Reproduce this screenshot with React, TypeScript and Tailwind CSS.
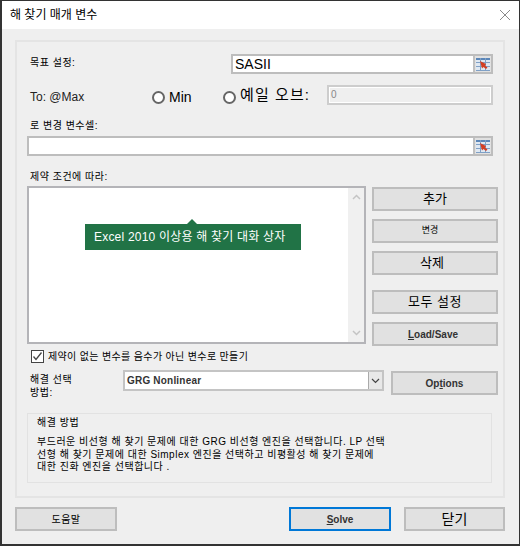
const font = { fontFamily: '"Liberation Sans","Noto Sans CJK KR",sans-serif' };

function RefIcon() {
  return (
    <div className="w-[18px] h-full shrink-0 bg-[#e1e1e1] border-l-2 border-[#c0c0c0] flex items-center justify-center">
      <svg width="14" height="13" viewBox="0 0 14 13">
        <rect x="0" y="0" width="14" height="13" fill="#dfe8f2" />
        <rect x="0" y="0" width="14" height="2" fill="#5b86b8" />
        <path d="M0 4.500H14M0 8.500H14M0 12.500H14M4.500 0V13M9.500 0V13" stroke="#7fa0c6" strokeWidth="1" fill="none" />
        <path d="M4 3L10 6L9 7.500L11.500 9.500L10 11L7.500 9L6 10.500Z" fill="#d43f24" />
      </svg>
    </div>
  );
}

function Btn({ children, className = "" }: { children: React.ReactNode; className?: string }) {
  return (
    <div className={`flex items-center justify-center bg-[#e1e1e1] border-2 border-[#bdbdbd] text-black ${className}`}>
      {children}
    </div>
  );
}

function Radio() {
  return <div className="w-[13px] h-[13px] mt-[4px] rounded-full bg-white border-2 border-[#666] shrink-0" />;
}

export default function App() {
  return (
    <div style={font} className="w-[520px] h-[546px] bg-[#efefef] border-[#333] border-l-2 border-t border-r border-b-2 flex flex-col overflow-hidden text-black">
      <div className="h-[28px] shrink-0 bg-white flex items-center justify-between pl-[8px] pr-[7px]">
        <span className="text-[12px]">해 찾기 매개 변수</span>
        <svg width="12" height="12" viewBox="0 0 12 12" className="mr-[1px]">
          <path d="M1 1L11 11M11 1L1 11" stroke="#8a8a8a" strokeWidth="1" fill="none" />
        </svg>
      </div>

      <div className="ml-[13px] mr-[14px] mt-[11px] h-[458px] border-2 border-[#e4e4e4] pl-[10px] pr-[4px] flex flex-col shrink-0">
        <div className="mt-[12px] h-[20px] flex items-center pr-[6px]">
          <span className="pl-[3px] text-[10px] tracking-[0.5px] -mt-[4px]">목표 설정:</span>
          <div className="ml-auto w-[262px] h-[20px] bg-white border-2 border-[#bdbdbd] flex items-center justify-between">
            <span className="pl-[2px] text-[14px]">SASII</span>
            <RefIcon />
          </div>
        </div>

        <div className="mt-[11px] h-[20px] flex items-center pr-[6px]" >
          <span className="pl-[3px] text-[12px] w-[125px] text-[#222] mt-[4px]">To: @Max</span>
          <Radio />
          <span className="ml-[4px] w-[54px] text-[14px] mt-[5px]">Min</span>
          <Radio />
          <span className="ml-[4px] text-[15px] tracking-[1.100px] whitespace-nowrap">예일 오브:</span>
          <div className="ml-auto w-[166px] h-[20px] bg-white border-2 border-[#cdcdcd] p-[1px] flex">
            <div className="flex-1 bg-[#efefef] pl-[1px] text-[10px] text-[#888] leading-[14px]">0</div>
          </div>
        </div>

        <div className="mt-[14px] h-[14px] pl-[3px] text-[10px] tracking-[0.5px] leading-[14px]">로 변경 변수셀:</div>
        <div className="mt-[3px] mr-[6px] h-[20px] bg-white border-2 border-[#bdbdbd] flex justify-end shrink-0">
          <RefIcon />
        </div>

        <div className="mt-[14px] h-[14px] pl-[3px] text-[10px] tracking-[0.5px] leading-[14px]">제약 조건에 따라:</div>

        <div className="mt-[2px] flex gap-[6px] h-[160px] shrink-0">
          <div className="w-[339px] h-[158px] bg-white border-2 border-[#b4b4b8] flex justify-end relative shrink-0">
            <div className="w-[16px] h-full bg-[#f0f0f0] flex flex-col justify-between items-center py-[6px]">
              <svg width="9" height="6" viewBox="0 0 9 6"><path d="M1 5L4.500 1.500L8 5" stroke="#c4c4c4" strokeWidth="1.500" fill="none" /></svg>
              <svg width="9" height="6" viewBox="0 0 9 6"><path d="M1 1L4.500 4.500L8 1" stroke="#c4c4c4" strokeWidth="1.500" fill="none" /></svg>
            </div>
            <div className="absolute left-[56px] top-[36px] w-[216px] h-[26px] bg-[#217346] flex items-center pl-[9px] text-white text-[12px] tracking-[0.2px] whitespace-nowrap">
              <span className="absolute left-[102px] -top-[5px] w-0 h-0 border-l-[5px] border-r-[5px] border-b-[5px] border-l-transparent border-r-transparent border-b-[#217346]" />
              Excel 2010 이상용 해 찾기 대화 상자
            </div>
          </div>
          <div className="w-[126px] flex flex-col mt-[1px] shrink-0">
            <Btn className="h-[24px] text-[13px]">추가</Btn>
            <Btn className="h-[24px] mt-[8px] text-[9px] pr-[10px]">변경</Btn>
            <Btn className="h-[24px] mt-[8px] text-[13px] pr-[6px]">삭제</Btn>
            <Btn className="h-[24px] mt-[15px] text-[13px] tracking-[0.5px]">모두 설정</Btn>
            <Btn className="h-[24px] mt-[8px] text-[10px] font-bold pr-[4px]"><span className="text-[#333]"><u>L</u>oad/Save</span></Btn>
          </div>
        </div>

        <div className="mt-[3px] h-[14px] flex items-center pl-[4px]">
          <div className="w-[13px] h-[13px] bg-white border border-[#444] flex items-center justify-center">
            <svg width="11" height="11" viewBox="0 0 11 11"><path d="M1.500 5.500L4 8.500L9.500 1.500" stroke="#444" strokeWidth="1.300" fill="none" /></svg>
          </div>
          <span className="ml-[4px] text-[10px] tracking-[0.35px] whitespace-nowrap">제약이 없는 변수를 음수가 아닌 변수로 만들기</span>
        </div>

        <div className="mt-[7px] h-[26px] flex">
          <div className="w-[96px] pl-[3px] text-[10px] tracking-[0.5px] leading-[13px] pt-[3px]">해결 선택<br />방법:</div>
          <div className="w-[261px] h-[21px] bg-white border-2 border-[#c4c4c4] flex justify-between">
            <span className="pl-[2px] text-[10px] font-bold text-[#333] leading-[17px] tracking-[0.2px]">GRG Nonlinear</span>
            <div className="w-[14px] bg-[#e8e8e8] border-l border-[#aaa] flex items-center justify-center">
              <svg width="9" height="6" viewBox="0 0 9 6"><path d="M1 1L4.500 4.500L8 1" stroke="#444" strokeWidth="1.200" fill="none" /></svg>
            </div>
          </div>
          <Btn className="ml-[7px] mt-[1px] w-[107px] h-[24px] text-[10px] font-bold"><span className="text-[#333]">Op<u>t</u>ions</span></Btn>
        </div>

        <div className="mt-[17px] w-[465px] h-[70px] border border-[#e2e2e2] pl-[9px] pt-[2px] text-[10px] whitespace-nowrap shrink-0">
          <div className="leading-[14px] tracking-[0.5px]">해결 방법</div>
          <div className="mt-[6px] leading-[12.500px] tracking-[0.5px]">
            <div>부드러운 비선형 해 찾기 문제에 대한 GRG 비선형 엔진을 선택합니다. LP 선택</div>
            <div>선형 해 찾기 문제에 대한 Simplex 엔진을 선택하고 비평활성 해 찾기 문제에</div>
            <div>대한 진화 엔진을 선택합니다 .</div>
          </div>
        </div>
      </div>

      <div className="mt-[9px] ml-[13px] h-[24px] flex shrink-0">
        <Btn className="w-[102px] h-[24px] text-[10px] tracking-[0.5px]">도움말</Btn>
        <div className="w-[102px] h-[24px] ml-[172px] flex items-center justify-center bg-[#e1e1e1] border-2 border-[#0078d7] text-[10px] font-bold text-[#333]"><span><u>S</u>olve</span></div>
        <Btn className="w-[101px] h-[24px] ml-[13px] text-[14px]">닫기</Btn>
      </div>
    </div>
  );
}
